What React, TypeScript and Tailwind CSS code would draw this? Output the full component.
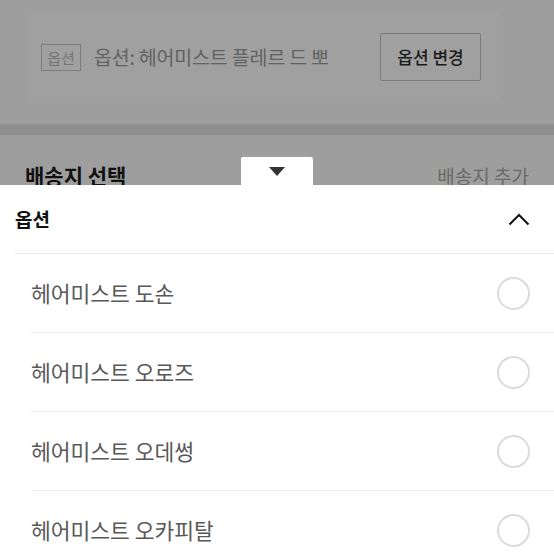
const options = ["헤어미스트 도손", "헤어미스트 오로즈", "헤어미스트 오데썽", "헤어미스트 오카피탈"];

export default function App() {
  return (
    <div className="w-[554px] h-[554px] overflow-hidden flex flex-col font-['Noto_Sans_CJK_KR','Noto_Sans',sans-serif]">
      {/* dimmed page behind the sheet */}
      <div className="h-[185px] shrink-0 overflow-hidden bg-[#9e9e9e]">
        <div className="h-[124px] pl-[30px] pt-[13px]">
          <div className="w-[470px] h-[88px] bg-[#a0a0a0] flex items-center pl-[11px] pr-[19px]">
            <span className="w-[40px] h-[27px] border border-[#7d7d7d] text-[#747474] text-[15px] leading-none flex items-center justify-center">
              옵션
            </span>
            <span className="ml-[13px] text-[19.5px] text-[#626262] tracking-[-0.2px]">옵션: 헤어미스트 플레르 드 뽀</span>
            <button className="ml-auto w-[101px] h-[48px] border border-[#7b7b7b] rounded-[2px] text-[17px] font-medium text-[#1c1c1c]">
              옵션 변경
            </button>
          </div>
        </div>
        <div className="h-[11px] bg-[#8f8f8f]" />
        <div className="flex justify-between items-center px-[25px] pt-[25px]">
          <span className="text-[21px] font-bold text-[#111]">배송지 선택</span>
          <span className="text-[19px] text-[#6a6a6a]">배송지 추가</span>
        </div>
      </div>

      {/* bottom sheet */}
      <div className="relative flex-1 bg-white">
        <div className="absolute left-[241px] -top-[28px] w-[72px] h-[29px] bg-white rounded-t-[2px] flex justify-center pt-[10px]">
          <svg width="16" height="9" viewBox="0 0 16 9">
            <path d="M0 0h16L8 9z" fill="#333" />
          </svg>
        </div>
        <div className="ml-[15px] h-[69px] border-b border-[#ebebeb] flex items-center justify-between pr-[24px]">
          <span className="text-[19px] font-bold text-[#111]">옵션</span>
          <svg width="22" height="13" viewBox="0 0 22 13" fill="none">
            <path d="M1.5 11.5 11 2l9.5 9.5" stroke="#111" strokeWidth="2" />
          </svg>
        </div>
        <ul className="pl-[31px]">
          {options.map((o) => (
            <li key={o} className="h-[79px] border-b border-[#ececec] flex items-center justify-between pr-[24px]">
              <span className="text-[21.5px] text-[#585858]">{o}</span>
              <span className="w-[33px] h-[33px] rounded-full border-2 border-[#dcdcdc]" />
            </li>
          ))}
        </ul>
      </div>
    </div>
  );
}
